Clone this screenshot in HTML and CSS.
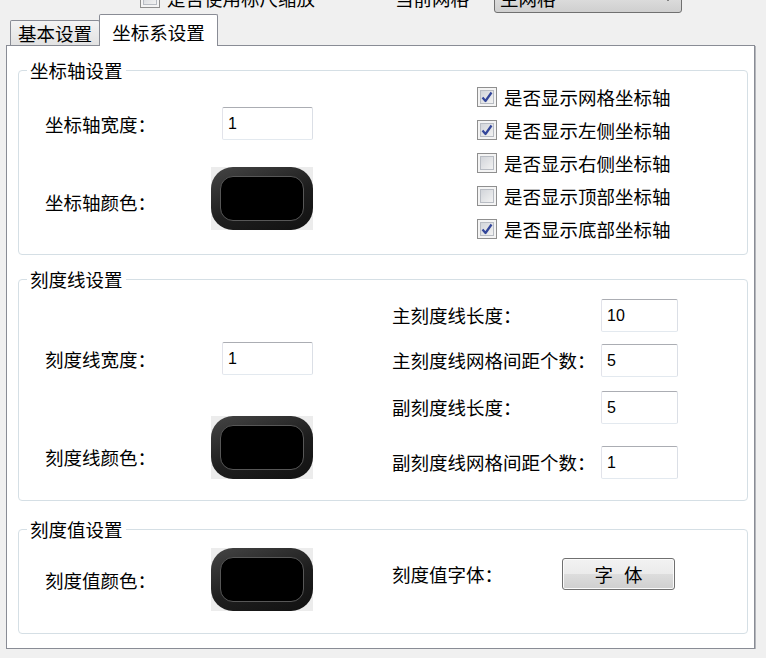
FILE: index.html
```html
<!DOCTYPE html>
<html lang="zh-CN">
<head>
    <meta charset="UTF-8">
    <meta name="viewport" content="width=device-width, initial-scale=1.0">
    <title>坐标系设置</title>
    <link rel="stylesheet" href="styles.css">
</head>
<body>

<!-- 上方被裁掉的一行 -->
<div class="topbar">
    <div class="opt"><span class="cb"></span>是否使用标尺缩放</div>
    <div class="opt-label">当前网格</div>
    <div class="combo">
        <span>主网格</span>
        <svg width="8" height="5" viewBox="0 0 8 5"><path d="M0 0 H8 L4 5 Z" fill="#000"/></svg>
    </div>
</div>

<div class="tabs">
    <div class="tab">基本设置</div>
    <div class="tab active">坐标系设置</div>
</div>

<div class="panel">

    <fieldset class="group">
        <legend>坐标轴设置</legend>
        <div class="group-body body-axis">
            <div class="pairs pairs-axis">
                <span>坐标轴宽度：</span>
                <input class="num" type="text" value="1">
                <span class="lbl-low">坐标轴颜色：</span>
                <div class="swatch"><div class="swatch-ring"><div class="swatch-core"></div></div></div>
            </div>
            <div class="checks">
                <div class="check"><span class="cb"><svg viewBox="0 0 14 14"><path d="M2.5 7.5 L5.5 11 L11.5 2.5" /></svg></span>是否显示网格坐标轴</div>
                <div class="check"><span class="cb"><svg viewBox="0 0 14 14"><path d="M2.5 7.5 L5.5 11 L11.5 2.5" /></svg></span>是否显示左侧坐标轴</div>
                <div class="check"><span class="cb"></span>是否显示右侧坐标轴</div>
                <div class="check"><span class="cb"></span>是否显示顶部坐标轴</div>
                <div class="check"><span class="cb"><svg viewBox="0 0 14 14"><path d="M2.5 7.5 L5.5 11 L11.5 2.5" /></svg></span>是否显示底部坐标轴</div>
            </div>
        </div>
    </fieldset>

    <fieldset class="group">
        <legend>刻度线设置</legend>
        <div class="group-body body-tick">
            <div class="pairs pairs-tick">
                <span>刻度线宽度：</span>
                <input class="num" type="text" value="1">
                <span class="lbl-lower">刻度线颜色：</span>
                <div class="swatch"><div class="swatch-ring"><div class="swatch-core"></div></div></div>
            </div>
            <div class="tick-rows">
                <div class="row"><span>主刻度线长度：</span><input class="num num-sm" type="text" value="10"></div>
                <div class="row"><span>主刻度线网格间距个数：</span><input class="num num-sm" type="text" value="5"></div>
                <div class="row"><span>副刻度线长度：</span><input class="num num-sm" type="text" value="5"></div>
                <div class="row"><span>副刻度线网格间距个数：</span><input class="num num-sm" type="text" value="1"></div>
            </div>
        </div>
    </fieldset>

    <fieldset class="group group-last">
        <legend>刻度值设置</legend>
        <div class="group-body body-value">
            <div class="pairs pairs-value">
                <span>刻度值颜色：</span>
                <div class="swatch"><div class="swatch-ring"><div class="swatch-core"></div></div></div>
            </div>
            <div class="font-row">
                <span>刻度值字体：</span>
                <button class="btn" type="button">字 体</button>
            </div>
        </div>
    </fieldset>

</div>

</body>
</html>
```

FILE: styles.css
```css
body {
    margin: 0;
    background: #f0f0f0;
    font-family: "Noto Sans CJK SC", sans-serif;
    font-size: 18.5px;
    color: #000;
    overflow: hidden;
}

/* 顶部一行（被窗口裁掉一半） */
.topbar {
    display: flex;
    align-items: center;
    height: 30px;
    margin-top: -17px;
    padding-left: 140px;
}
.opt {
    width: 255px;
    display: flex;
    align-items: center;
    gap: 7px;
}
.opt-label {
    width: 99px;
}
.combo {
    width: 188px;
    height: 30px;
    box-sizing: border-box;
    border: 1px solid #707070;
    border-radius: 3px;
    background: linear-gradient(#f2f2f2, #ebebeb 50%, #dddddd 50%, #cfcfcf);
    display: flex;
    align-items: center;
    justify-content: space-between;
    padding: 0 9px 0 5px;
}

/* 选项卡 */
.tabs {
    display: flex;
    align-items: flex-end;
    padding-left: 10px;
    margin-top: 1px;
}
.tab {
    width: 90px;
    height: 25px;
    box-sizing: border-box;
    border: 1px solid #898c95;
    border-bottom: none;
    border-radius: 2px 2px 0 0;
    background: linear-gradient(#f3f3f3, #e2e2e2);
    display: flex;
    align-items: center;
    justify-content: center;
    line-height: 1;
}
.tab.active {
    width: 119px;
    height: 32px;
    margin-left: -1px;
    margin-bottom: -1px;
    padding-top: 3px;
    background: #fff;
    position: relative;
    z-index: 1;
}

.panel {
    margin-left: 6px;
    width: 749px;
    box-sizing: border-box;
    border: 1px solid #898c95;
    background: #fff;
    padding: 12px 6px 14px 11px;
    box-shadow: 1px 1px 0 #b4b6bb;
}

/* 分组框 */
.group {
    margin: 0;
    padding: 0;
    min-width: 0;
    border: 1px solid #d5dfe5;
    border-radius: 4px;
}
.group + .group {
    margin-top: 12px;
}
.group.group-last {
    margin-top: 16px;
}
legend {
    margin-left: 8px;
    padding: 0 3px;
    line-height: 24px;
}
.group-body {
    display: grid;
    grid-template-columns: 347px 1fr;
    align-items: start;
    padding-left: 26px;
}
.body-axis { height: 172px; }
.body-tick { height: 209px; }
.body-value { height: 92px; }

.pairs {
    display: grid;
    grid-template-columns: 166px 102px;
    align-items: center;
}
.pairs span {
    line-height: 24px;
}
.pairs-axis {
    padding-top: 25px;
    row-gap: 27px;
}
.pairs-tick {
    padding-top: 51px;
    row-gap: 41px;
}
.pairs-value {
    padding-top: 7px;
}
.lbl-low { margin-top: 7px; }
.lbl-lower { margin-top: 18px; }

.num {
    width: 91px;
    height: 33px;
    box-sizing: border-box;
    border: 1px solid;
    border-color: #abadb3 #dbdfe6 #e3e9ef #e2e3ea;
    border-radius: 2px;
    padding: 0 0 0 5px;
    margin: 0;
    font: 16px "Liberation Sans", sans-serif;
    color: #000;
    background: #fff;
    justify-self: end;
}
.num.num-sm {
    width: 77px;
}

/* 颜色块 */
.swatch {
    width: 102px;
    height: 63px;
    background: #ececec;
}
.swatch-ring {
    height: 100%;
    box-sizing: border-box;
    padding: 9px;
    border-radius: 22px;
    background: linear-gradient(160deg, #454545, #1e1e1e 55%, #111);
}
.swatch-core {
    height: 100%;
    box-sizing: border-box;
    border: 1px solid #575757;
    border-radius: 13px;
    background: #000;
}

/* 复选框 */
.checks {
    margin-top: -2px;
    padding-left: 85px;
}
.check {
    height: 33px;
    display: flex;
    align-items: center;
    gap: 7px;
}
.cb {
    width: 20px;
    height: 20px;
    box-sizing: border-box;
    border: 1px solid #8f8f8f;
    padding: 2px;
    background: #fff;
    box-shadow: inset 0 0 0 2px #f4f4f4;
    flex: none;
    display: flex;
    position: relative;
}
.cb::before {
    content: "";
    position: absolute;
    inset: 2px;
    border: 1px solid #b8bcc3;
    background: linear-gradient(135deg, #d2d5da, #f2f2f2);
}
.cb svg {
    position: relative;
    width: 14px;
    height: 14px;
}
.cb svg path {
    fill: none;
    stroke: #33469a;
    stroke-width: 2.2;
    stroke-linejoin: round;
}

/* 刻度线右侧 */
.tick-rows {
    padding-top: 8px;
    display: grid;
    grid-template-rows: 45px 47px 55px 33px;
}
.row {
    display: grid;
    grid-template-columns: 209px 77px;
    align-items: start;
}
.row span {
    line-height: 33px;
}

.font-row {
    display: grid;
    grid-template-columns: 170px 113px;
    align-items: center;
    padding-top: 17px;
}
.btn {
    width: 113px;
    height: 32px;
    border: 1px solid #707070;
    border-radius: 3px;
    background: linear-gradient(#f2f2f2, #ebebeb 50%, #dddddd 50%, #cfcfcf);
    box-shadow: inset 0 0 0 1px #fbfbfb;
    font: inherit;
    word-spacing: 7px;
    color: #000;
    padding: 0;
}
```
